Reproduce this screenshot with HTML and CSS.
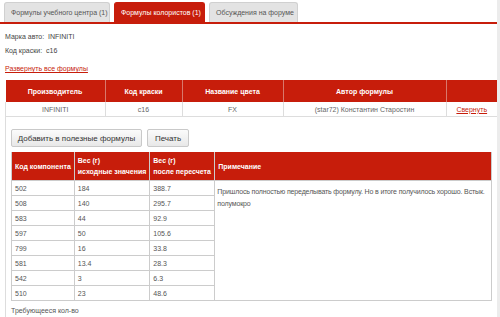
FILE: index.html
```html
<!DOCTYPE html>
<html lang="ru">
<head>
    <meta charset="UTF-8">
    <title>Формулы колористов</title>
    <link rel="stylesheet" href="styles.css">
</head>
<body>
    <div class="page">
        <div class="tabs">
            <div class="tab">Формулы учебного центра (1)</div>
            <div class="tab active">Формулы колористов (1)</div>
            <div class="tab">Обсуждения на форуме</div>
        </div>
        <div class="info">
            <div class="line">Марка авто:&nbsp; INFINITI</div>
            <div class="line">Код краски:&nbsp; c16</div>
            <a href="#" class="expand">Развернуть все формулы</a>
        </div>
        <table class="formulas">
            <tr class="head">
                <th class="c1">Производитель</th>
                <th class="c2">Код краски</th>
                <th class="c3">Название цвета</th>
                <th class="c4">Автор формулы</th>
                <th class="c5"></th>
            </tr>
            <tr class="row">
                <td>INFINITI</td>
                <td>c16</td>
                <td>FX</td>
                <td>(star72) Константин Старостин</td>
                <td><a href="#" class="collapse">Свернуть</a></td>
            </tr>
            <tr>
                <td colspan="5" class="details">
                    <div class="buttons">
                        <button>Добавить в полезные формулы</button>
                        <button>Печать</button>
                    </div>
                    <table class="components">
                        <tr class="head">
                            <th class="k1">Код компонента</th>
                            <th class="k2">Вес (г)<br>исходные значения</th>
                            <th class="k3">Вес (г)<br>после пересчета</th>
                            <th>Примечание</th>
                        </tr>
                        <tr><td>502</td><td>184</td><td>388.7</td><td rowspan="8" class="note">Пришлось полностью переделывать формулу. Но в итоге получилось хорошо. Встык. полумокро</td></tr>
                        <tr><td>508</td><td>140</td><td>295.7</td></tr>
                        <tr><td>583</td><td>44</td><td>92.9</td></tr>
                        <tr><td>597</td><td>50</td><td>105.6</td></tr>
                        <tr><td>799</td><td>16</td><td>33.8</td></tr>
                        <tr><td>581</td><td>13.4</td><td>28.3</td></tr>
                        <tr><td>542</td><td>3</td><td>6.3</td></tr>
                        <tr><td>510</td><td>23</td><td>48.6</td></tr>
                    </table>
                    <div class="needed">Требующееся кол-во</div>
                </td>
            </tr>
        </table>
    </div>
</body>
</html>
```

FILE: styles.css
```css
body {
    margin: 0;
    font-family: "Liberation Sans", Arial, sans-serif;
    font-size: 7px;
    color: #444;
    background: #fff;
}
.page {
    width: 497px;
    height: 317px;
    overflow: hidden;
    border-right: 3px solid #ececec;
    white-space: nowrap;
}
.tabs {
    display: flex;
    gap: 4px;
    padding: 2px 0 0 4px;
    border-bottom: 2px solid #c71d0b;
    width: 496px;
}
.tab {
    height: 20px;
    line-height: 20px;
    padding: 0 0 0 6px;
    background: #e3e3e3;
    border: 1px solid #d0d0d0;
    border-bottom: none;
    border-radius: 3px 3px 0 0;
    color: #555;
    box-sizing: border-box;
}
.tab:nth-child(1) { width: 106px; }
.tab:nth-child(2) { width: 91px; }
.tab:nth-child(3) { width: 89px; }
.tab.active {
    background: #c71d0b;
    border-color: #c71d0b;
    color: #fff;
}
.info {
    padding: 6px 5px 0;
}
.line {
    height: 14px;
    line-height: 14px;
}
.expand {
    display: block;
    margin-top: 7px;
    color: #c71d0b;
}
.collapse {
    color: #c71d0b;
}
.formulas {
    margin: 8px 0 0 5px;
    width: 492px;
    border-collapse: collapse;
}
.formulas > tbody > .head > th {
    background: #c71d0b;
    color: #fff;
    height: 22px;
    padding: 0;
    border-right: 1px solid #d8786c;
}
.formulas > tbody > .head > th:last-child {
    border-right: none;
}
.c1 { width: 99px; }
.c2 { width: 76px; }
.c3 { width: 100px; }
.c4 { width: 162px; }
.formulas > tbody > .row > td {
    height: 14px;
    padding: 0;
    text-align: center;
    color: #666;
    border: 1px solid #ddd;
    border-top: none;
}
.details {
    border: 1px solid #ddd;
    border-top: none;
    padding: 12px 5px 4px;
    vertical-align: top;
}
.buttons {
    display: flex;
    gap: 5px;
}
button {
    height: 18px;
    padding: 0;
    font-family: "Liberation Sans", Arial, sans-serif;
    font-size: 8px;
    color: #333;
    background: linear-gradient(#fbfbfb, #e8e8e8);
    border: 1px solid #c9c9c9;
    border-radius: 2px;
}
button:first-child { width: 131px; }
button:last-child { width: 42px; }
.components {
    margin-top: 5px;
    width: 481px;
    border-collapse: collapse;
}
.components th {
    background: #c71d0b;
    color: #fff;
    text-align: left;
    height: 28px;
    padding: 0 3px;
    line-height: 11px;
    border: 1px solid #ccc;
    border-top: none;
    border-bottom: none;
}
.k1 { width: 54px; }
.k2 { width: 67px; }
.k3 { width: 58px; }
.components td {
    height: 14px;
    padding: 0 3px;
    border: 1px solid #ccc;
    color: #555;
}
.components td.note {
    vertical-align: top;
    padding: 5px 1px 5px 2px;
    line-height: 12px;
    letter-spacing: -0.15px;
    white-space: normal;
}
.needed {
    margin-top: 6px;
    color: #555;
}
```
